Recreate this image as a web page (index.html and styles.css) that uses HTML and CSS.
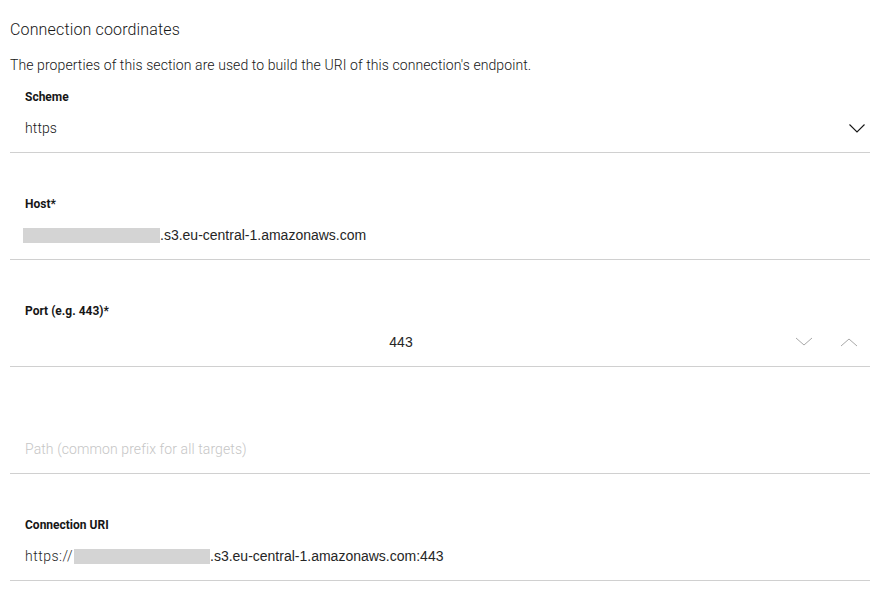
FILE: index.html
```html
<!DOCTYPE html>
<html>
<head>
<meta charset="utf-8">
<link rel="stylesheet" href="styles.css">
</head>
<body>
<div class="page">
  <h2 class="title">Connection coordinates</h2>
  <p class="desc">The properties of this section are used to build the URI of this connection's endpoint.</p>

  <div class="field first">
    <div class="label">Scheme</div>
    <div class="row">
      <span class="value plex">https</span>
      <svg class="chev" width="18" height="10" viewBox="0 0 18 10"><path d="M1.5 1.5 L9 9 L16.5 1.5" fill="none" stroke="#161616" stroke-width="1.1"/></svg>
    </div>
  </div>

  <div class="field">
    <div class="label">Host*</div>
    <div class="row">
      <span class="value arial"><span class="redact host"></span>.s3.eu-central-1.amazonaws.com</span>
    </div>
  </div>

  <div class="field">
    <div class="label">Port (e.g. 443)*</div>
    <div class="row">
      <span class="value arial port">443</span>
      <div class="spin">
        <svg width="18" height="10" viewBox="0 0 18 10"><path d="M1 1 L9 8 L17 1" fill="none" stroke="#a8a8a8" stroke-width="1"/></svg>
        <svg width="18" height="10" viewBox="0 0 18 10"><path d="M1 9 L9 2 L17 9" fill="none" stroke="#a8a8a8" stroke-width="1"/></svg>
      </div>
    </div>
  </div>

  <div class="field">
    <div class="label empty">&nbsp;</div>
    <div class="row">
      <span class="value plex placeholder">Path (common prefix for all targets)</span>
    </div>
  </div>

  <div class="field">
    <div class="label">Connection URI</div>
    <div class="row">
      <span class="value arial"><span class="proto">https://</span><span class="redact"></span>.s3.eu-central-1.amazonaws.com:443</span>
    </div>
  </div>
</div>
</body>
</html>
```
FILE: styles.css
```css
html, body {
  margin: 0;
  padding: 0;
  background: #ffffff;
}
body {
  font-family: "Roboto", "Liberation Sans", sans-serif;
  color: #161616;
}
.page {
  padding: 0 11px 0 10px;
}
.title {
  margin: 0;
  padding-top: 20px;
  font-size: 16px;
  line-height: 20px;
  font-weight: 300;
  letter-spacing: 0.15px;
  color: #161616;
}
.desc {
  margin: 15px 0 0 0;
  font-size: 14px;
  line-height: 20px;
  font-weight: 300;
  letter-spacing: 0.09px;
  color: #161616;
}
.field {
  border-bottom: 1px solid #d0d0d0;
  padding: 43px 0 14px 15px;
}
.field.first {
  padding-top: 14px;
}
.label {
  font-size: 12px;
  line-height: 16px;
  font-weight: 700;
  color: #161616;
}
.row {
  margin-top: 13px;
  height: 20px;
  display: flex;
  align-items: center;
  padding-right: 4px;
}
.value {
  font-size: 14px;
  line-height: 20px;
  flex: 1;
  display: flex;
  align-items: center;
  white-space: nowrap;
}
.plex {
  font-family: "Roboto", sans-serif;
  font-weight: 300;
  letter-spacing: 0.1px;
}
.arial {
  font-family: "Liberation Sans", Arial, sans-serif;
  color: #262626;
}
.proto {
  display: inline-block;
  width: 49px;
  font-family: "Roboto", sans-serif;
  font-weight: 300;
  letter-spacing: 0.5px;
}
.redact {
  display: inline-block;
  width: 136px;
  height: 15px;
  background: #d4d4d4;
}
.redact.host {
  margin-left: -2px;
  width: 137px;
}
.chev {
  display: block;
}
.port {
  justify-content: center;
  padding-right: 2px;
}
.spin {
  display: flex;
  gap: 27px;
  margin-right: 8px;
  margin-left: 16px;
}
.spin svg {
  display: block;
}
.placeholder {
  color: #c6c6c6;
}
```
